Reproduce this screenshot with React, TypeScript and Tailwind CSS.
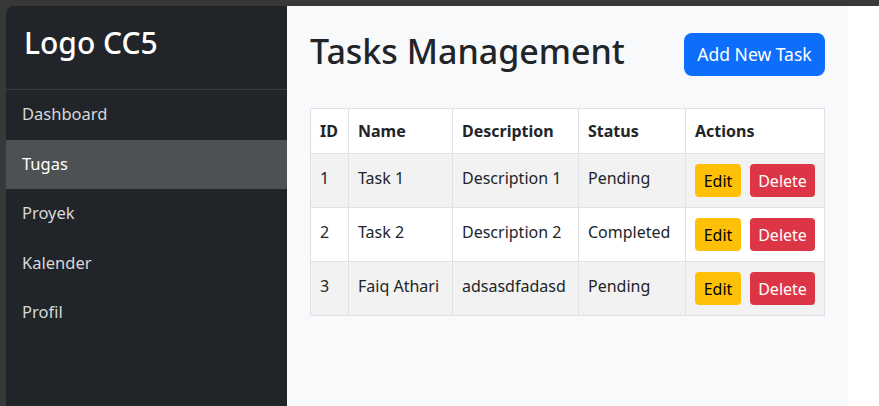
import React from 'react';

const NAV = ['Dashboard', 'Tugas', 'Proyek', 'Kalender', 'Profil'];

const TASKS = [
  { id: 1, name: 'Task 1', description: 'Description 1', status: 'Pending' },
  { id: 2, name: 'Task 2', description: 'Description 2', status: 'Completed' },
  { id: 3, name: 'Faiq Athari', description: 'adsasdfadasd', status: 'Pending' },
];

export default function App() {
  return (
    <div
      className="h-screen bg-[#383838] pt-[6px] pl-[6px] flex text-[#212529]"
      style={{ fontFamily: '"Noto Sans", "Open Sans", sans-serif' }}
    >
      {/* Sidebar */}
      <aside className="w-[281px] shrink-0 bg-[#212529] rounded-tl-lg flex flex-col">
        <div className="pl-[18px] pr-4 pt-[19px] pb-[28px] border-b border-[#3a3e42]">
          <h3 className="text-[30px] leading-[1.2] font-medium text-white">Logo CC5</h3>
        </div>
        <nav className="flex flex-col">
          {NAV.map((item) => (
            <a
              key={item}
              className={
                item === 'Tugas'
                  ? 'h-[49.5px] flex items-center px-4 text-[16.5px] bg-[#4d5154] text-white'
                  : 'h-[49.5px] flex items-center px-4 text-[16.5px] text-[#d6d8da]'
              }
            >
              {item}
            </a>
          ))}
        </nav>
      </aside>

      {/* Main */}
      <main className="w-[561px] shrink-0 bg-[#f8f9fa] px-[23px] pt-6">
        <div className="flex justify-between items-start mb-8">
          <h1 className="text-[34px] leading-[1.24] font-medium">Tasks Management</h1>
          <button className="mt-[3px] w-[141px] h-[43px] rounded-lg bg-[#0d6efd] text-white text-[17.5px]">
            Add New Task
          </button>
        </div>

        <table className="w-full table-fixed border-collapse bg-white text-base">
          <colgroup>
            <col className="w-[38px]" />
            <col className="w-[104px]" />
            <col className="w-[126px]" />
            <col className="w-[107px]" />
            <col />
          </colgroup>
          <thead>
            <tr>
              {['ID', 'Name', 'Description', 'Status', 'Actions'].map((h) => (
                <th key={h} className="border border-[#dee2e6] px-[9px] py-[10px] text-left font-bold leading-6">
                  {h}
                </th>
              ))}
            </tr>
          </thead>
          <tbody>
            {TASKS.map((t, i) => (
              <tr key={t.id} className={i % 2 === 0 ? 'bg-[#f2f2f2]' : 'bg-white'}>
                <td className="border border-[#dee2e6] px-[9px] pt-[12px] pb-2 align-top leading-6">{t.id}</td>
                <td className="border border-[#dee2e6] px-[9px] pt-[12px] pb-2 align-top leading-6 whitespace-nowrap">{t.name}</td>
                <td className="border border-[#dee2e6] px-[9px] pt-[12px] pb-2 align-top leading-6 whitespace-nowrap">{t.description}</td>
                <td className="border border-[#dee2e6] px-[9px] pt-[12px] pb-2 align-top leading-6">{t.status}</td>
                <td className="border border-[#dee2e6] px-[9px] py-[10px] align-top">
                  <div className="flex gap-[9px]">
                    <button className="w-[46px] h-[33px] rounded bg-[#ffc107] text-black flex items-center justify-center">
                      Edit
                    </button>
                    <button className="w-[65px] h-[33px] rounded bg-[#dc3545] text-white flex items-center justify-center">
                      Delete
                    </button>
                  </div>
                </td>
              </tr>
            ))}
          </tbody>
        </table>
      </main>

      <div className="flex-1 bg-white" />
    </div>
  );
}
